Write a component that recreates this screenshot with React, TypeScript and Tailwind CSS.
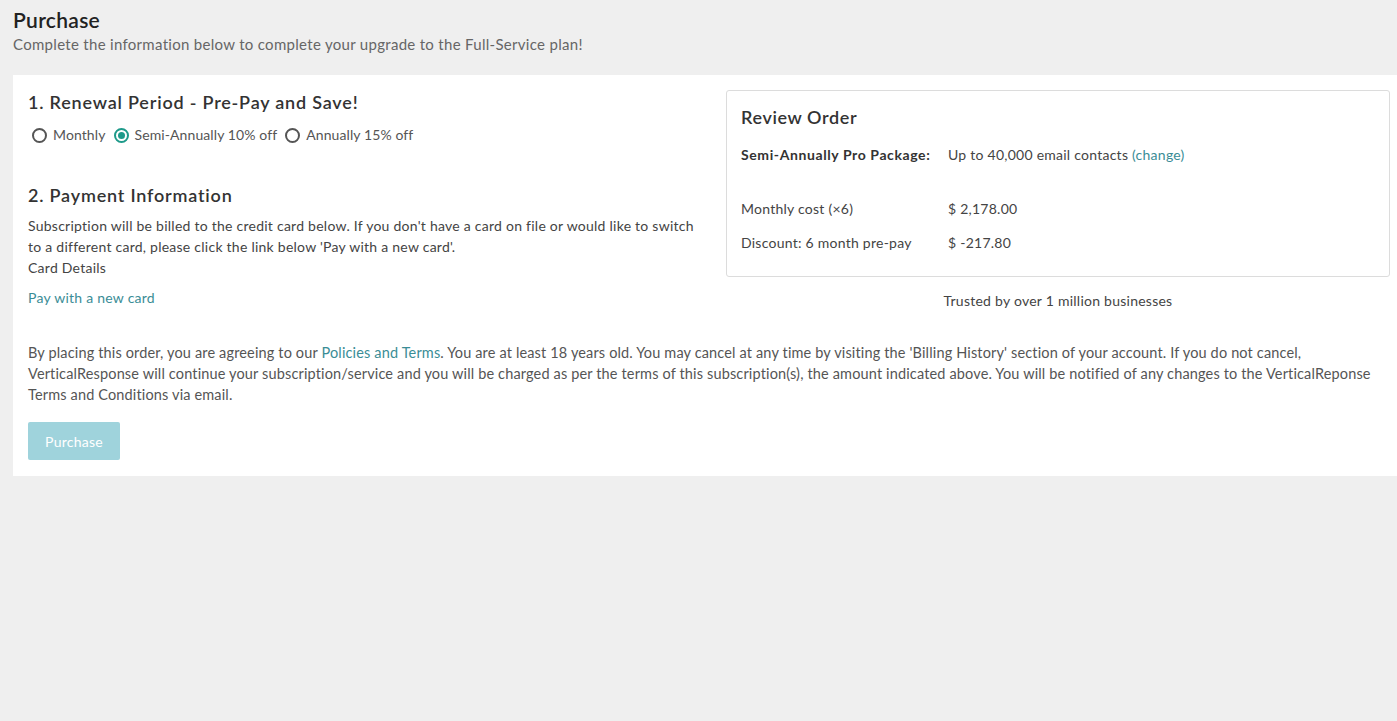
import React, { useState } from "react"

const font = { fontFamily: "Lato, 'Noto Sans', sans-serif" }

const Radio = ({ label, checked, onClick }: { label: string; checked: boolean; onClick: () => void }) => (
    <label onClick={onClick} className="flex items-center gap-[6px] cursor-pointer mr-[8px]">
        <span
            className={`w-[15px] h-[15px] rounded-full border-2 flex items-center justify-center ${checked ? "border-[#1e9a8a]" : "border-[#555]"}`}
        >
            {checked && <span className="w-[7px] h-[7px] rounded-full bg-[#1e9a8a]" />}
        </span>
        <span className="text-[14px] text-[#555] tracking-[0.1px]">{label}</span>
    </label>
)

export default function App() {
    const [period, setPeriod] = useState("semi")

    return (
        <div style={font} className="min-h-[721px] bg-[#efefef] pl-[13px] pt-[7px]">
            <h1 className="text-[21px] font-semibold text-[#222] leading-[26px] tracking-[0.3px]">Purchase</h1>
            <p className="text-[15px] text-[#666] leading-[22px] tracking-[0.3px]">
                Complete the information below to complete your upgrade to the Full-Service plan!
            </p>

            <div className="bg-white mt-[20px] pl-[15px] pr-[7px] pt-[15px] pb-[16px]">
                <div className="flex">
                    <div className="w-[672px] shrink-0">
                        <h2 className="text-[18px] font-semibold text-[#333] leading-[24px] tracking-[0.8px]">
                            1. Renewal Period - Pre-Pay and Save!
                        </h2>
                        <div className="flex items-center mt-[11px] ml-[4px] leading-[20px]">
                            <Radio label="Monthly" checked={period === "monthly"} onClick={() => setPeriod("monthly")} />
                            <Radio label="Semi-Annually 10% off" checked={period === "semi"} onClick={() => setPeriod("semi")} />
                            <Radio label="Annually 15% off" checked={period === "annual"} onClick={() => setPeriod("annual")} />
                        </div>

                        <h2 className="text-[18px] font-semibold text-[#333] leading-[24px] mt-[38px] tracking-[0.8px]">
                            2. Payment Information
                        </h2>
                        <p className="text-[14px] text-[#444] leading-[21px] mt-[8px] tracking-[0.25px]">
                            Subscription will be billed to the credit card below. If you don't have a card on file or would like to switch to a different card, please click the link below 'Pay with a new card'.
                        </p>
                        <p className="text-[14px] text-[#444] leading-[21px] tracking-[0.25px]">Card Details</p>
                        <a href="#" className="block text-[14px] text-[#3a8d96] leading-[21px] mt-[9px] tracking-[0.25px]">
                            Pay with a new card
                        </a>
                    </div>

                    <div className="flex-1 ml-[26px]">
                        <div className="border border-[#dcdcdc] rounded-[3px] pl-[14px] pt-[14px] pb-[23px]">
                            <h3 className="text-[18px] font-semibold text-[#333] leading-[24px] tracking-[0.6px]">Review Order</h3>
                            <div className="flex text-[14px] leading-[20px] mt-[16px]">
                                <span className="w-[207px] font-bold text-[#333] tracking-[0.6px]">Semi-Annually Pro Package:</span>
                                <span className="text-[#444] tracking-[0.25px]">
                                    Up to 40,000 email contacts <a href="#" className="text-[#3a8d96]">(change)</a>
                                </span>
                            </div>
                            <div className="flex text-[14px] leading-[20px] mt-[34px] text-[#444] tracking-[0.25px]">
                                <span className="w-[207px]">Monthly cost (×6)</span>
                                <span>$ 2,178.00</span>
                            </div>
                            <div className="flex text-[14px] leading-[20px] mt-[14px] text-[#444] tracking-[0.25px]">
                                <span className="w-[207px]">Discount: 6 month pre-pay</span>
                                <span>$ -217.80</span>
                            </div>
                        </div>
                        <p className="text-center text-[14px] text-[#444] leading-[20px] mt-[14px] tracking-[0.25px]">
                            Trusted by over 1 million businesses
                        </p>
                    </div>
                </div>

                <p className="text-[14.5px] text-[#555] leading-[21px] mt-[31px] tracking-[0.15px]">
                    By placing this order, you are agreeing to our{" "}
                    <a href="#" className="text-[#3a8d96]">Policies and Terms</a>. You are at least 18 years old. You may cancel at any time by visiting the 'Billing History' section of your account. If you do not cancel,<br />
                    VerticalResponse will continue your subscription/service and you will be charged as per the terms of this subscription(s), the amount indicated above. You will be notified of any changes to the VerticalReponse Terms and Conditions via email.
                </p>

                <button className="mt-[17px] w-[92px] h-[38px] rounded-[2px] bg-[#9fd3dc] text-white text-[14px] tracking-[0.25px]">
                    Purchase
                </button>
            </div>
        </div>
    )
}
